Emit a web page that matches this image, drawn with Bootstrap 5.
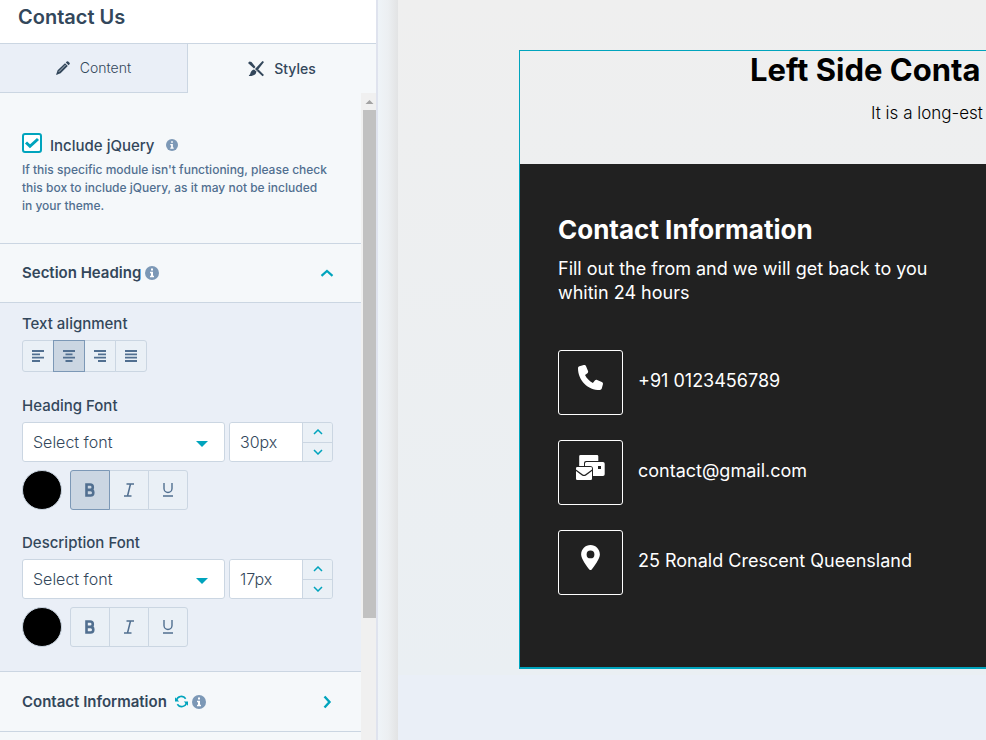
<!DOCTYPE html>
<html lang="en">
<head>
<meta charset="utf-8">
<meta name="viewport" content="width=device-width, initial-scale=1">
<title>Contact Us</title>
<link href="https://cdn.jsdelivr.net/npm/bootstrap@5.3.0/dist/css/bootstrap.min.css" rel="stylesheet">
<style>
  :root { --ink: #33475b; --slate: #516f90; --line: #cbd6e2; --teal: #00a4bd; --pale: #f5f8fa; --fill: #eaeff7; }
  body { font-family: Inter, "Liberation Sans", sans-serif; color: var(--ink); font-size: 14px; line-height: 20px; background: var(--fill); }
  svg { display: block; flex: none; }
  .editor { width: 378px; border-right: 2px solid #dfe3ee; background: var(--pale); }
  .editor-title { height: 44px; padding: 4px 18px 0; border-bottom: 1px solid var(--line); background: #fff; font-size: 20px; line-height: 26px; font-weight: 600; }
  .tab-btn { height: 49px; border: 0; background: var(--pale); color: var(--ink); gap: 10px; font-weight: 500; }
  .tab-btn.off { background: var(--fill); border-right: 1px solid var(--line); border-bottom: 1px solid var(--line); font-weight: 300; }
  .scroll-track { width: 15px; background: #f0f0f0; padding: 7px 0 0 2px; }
  .scroll-thumb { width: 13px; height: 508px; margin-top: 6px; background: #c1c1c1; }
  .block { border-bottom: 1px solid var(--line); padding-left: 22px; padding-right: 22px; }
  .intro { height: 151px; padding-top: 40px; }
  .intro label { font-size: 15px; margin: 3px 12px 0 8px; }
  .intro svg { margin-top: 6px; }
  .intro .form-check-input { width: 20px; height: 20px; margin: 0; border: 2px solid var(--teal); border-radius: 3px; background-color: #fff; background-size: 20px; }
  .intro .form-check-input:checked { background-image: url("data:image/svg+xml,%3Csvg xmlns='http://www.w3.org/2000/svg' viewBox='0 0 20 20'%3E%3Cpath d='M4 9.500l4 3.800L16 6' fill='none' stroke='%2300a4bd' stroke-width='3'/%3E%3C/svg%3E"); }
  .intro p { font-size: 12px; line-height: 18px; color: var(--slate); font-weight: 500; padding-right: 12px; margin-top: 5px; }
  .fold { height: 59px; border-top: 0; border-left: 0; border-right: 0; background: var(--pale); color: var(--ink); font-size: 15px; font-weight: 600; text-align: left; }
  .fold.closed { height: 60px; }
  .fold .end { margin: 0 5px 0 auto; }
  .fields { background: var(--fill); padding-top: 11px; padding-bottom: 24px; }
  .fields .lbl { display: block; font-size: 15px; font-weight: 500; margin-bottom: 6px; }
  .field { margin-bottom: 24px; }
  .field + .field { margin-bottom: 23px; }
  .field:last-child { margin-bottom: 0; }
  .tool { width: 32px; height: 32px; padding: 0; border: 1px solid var(--line); border-radius: 0; background: #eaf0f6; color: var(--slate); display: flex; align-items: center; justify-content: center; margin-left: -1px; }
  .tool.big { width: 40px; height: 40px; }
  .tool:first-child { margin-left: 0; border-radius: 3px 0 0 3px; }
  .tool:last-child { border-radius: 0 3px 3px 0; }
  .tool.on { background: var(--line); border-color: #7c98b6; z-index: 1; }
  .font-row { gap: 4px; margin-bottom: 8px; }
  .font-pick { appearance: none; width: 203px; height: 40px; padding: 0 10px; border: 1px solid var(--line); border-radius: 3px; color: var(--ink); font-size: 16px; font-weight: 300; background: #fff url("data:image/svg+xml,%3Csvg xmlns='http://www.w3.org/2000/svg' viewBox='0 0 12 6'%3E%3Cpath d='M0 0h12L6 6z' fill='%2300a4bd'/%3E%3C/svg%3E") no-repeat right 16px top 18px / 12px 6px; }
  .stepper { width: 104px; height: 40px; border: 1px solid var(--line); border-radius: 3px; overflow: hidden; }
  .stepper input { width: 72px; padding: 0 10px; border: 0; color: var(--ink); font-size: 16px; font-weight: 300; }
  .stepper button { border: 0; border-left: 1px solid var(--line); background: #eaf0f6; padding: 0; }
  .stepper button + button { border-top: 1px solid var(--line); }
  .swatch { width: 40px; height: 40px; padding: 0; border: 1px solid var(--line); border-radius: 50%; background: #000; margin-right: 8px; }
  .edge { width: 20px; background: linear-gradient(90deg, #eff4f8, #eceff2 50%, #e2e3e4); }
  .stage { overflow: hidden; min-width: 0; padding: 50px 0 0 121px; background: linear-gradient(#efefef, #eaeff3 675px, var(--fill) 675px); }
  .module { border: solid var(--teal); border-width: 1px 0 2px 1px; font-size: 18px; white-space: nowrap; }
  .module-head { height: 113px; color: #000; }
  .module-head h2 { font-size: 31px; line-height: 38px; font-weight: 700; margin: 0 0 14px; padding-left: 230px; }
  .module-head p { font-size: 17px; line-height: 20px; font-weight: 300; padding-left: 351px; }
  .module-body { background: #212121; color: #fff; padding: 49px 38px 72px; }
  .module-body h3 { font-size: 26px; line-height: 34px; font-weight: 700; margin-bottom: 10px; }
  .module-body p { line-height: 24px; margin-bottom: 45px; width: 390px; white-space: normal; }
  .tile { width: 65px; height: 65px; border: 1px solid #fff; border-radius: 3px; padding-top: 14px; }
  .contacts { display: grid; gap: 25px; }
  .contact { gap: 15px; line-height: 24px; }
  .contact .info-text { padding-bottom: 3px; }
</style>
<script src="https://cdn.jsdelivr.net/npm/bootstrap@5.3.0/dist/js/bootstrap.bundle.min.js"></script>
</head>
<body>
<svg width="0" height="0" class="position-absolute" aria-hidden="true">
  <symbol id="info" viewBox="0 0 14 14"><circle cx="7" cy="7" r="7" fill="#7c98b6"/><path d="M6 2.500h2v2H6zM5 5.800h3v4h1v1.500H5V9.800h1V7.200H5z" fill="#fff"/></symbol>
  <symbol id="step-up" viewBox="0 0 10 6"><path d="M1 5l4-4 4 4" fill="none" stroke="#00a4bd" stroke-width="1.500"/></symbol>
  <symbol id="step-down" viewBox="0 0 10 6"><path d="M1 1l4 4 4-4" fill="none" stroke="#00a4bd" stroke-width="1.500"/></symbol>
  <symbol id="b" viewBox="0 0 12 14"><path d="M2.500 1.500v11h4a2.800 2.800 0 0 0 0-5.600h-4 3.600a2.700 2.700 0 0 0 0-5.400z" fill="none" stroke="#516f90" stroke-width="2.600"/></symbol>
  <symbol id="i" viewBox="0 0 12 14"><path d="M3.500 1H11M1 13h7.500M7.500 1L4.500 13" fill="none" stroke="#516f90" stroke-width="1.500"/></symbol>
  <symbol id="u" viewBox="0 0 12 14"><path d="M2 0v5.500a4 4 0 0 0 8 0V0M1 13h10" fill="none" stroke="#516f90" stroke-width="1.400"/></symbol>
</svg>
<div class="d-flex min-vh-100 overflow-hidden">
  <aside class="editor flex-shrink-0 d-flex flex-column">
    <h1 class="editor-title m-0">Contact Us</h1>
    <div class="d-flex" role="tablist">
      <button class="tab-btn off col-6 d-flex align-items-center justify-content-center" role="tab" aria-selected="false"><svg width="14" height="14" viewBox="0 0 14 14" fill="#33475b"><path d="M0 14l1.600-4.800L9 2.200l2.800 2.800-7.200 7.300zM9.800 1.400l1-.9q.7-.7 1.400 0l1.300 1.300q.7.700 0 1.400l-.9 1z"/><path d="M2.800 10.800L9.600 4" stroke="#eaeff7" stroke-width=".7"/></svg>Content</button>
      <button class="tab-btn col-6 d-flex align-items-center justify-content-center" role="tab" aria-selected="true"><svg width="16" height="16" viewBox="0 0 16 16" fill="#33475b"><path d="M0 2l1.500-1.500 2 .5 4 5-1.500 1.500zM9 10l1.500-1.500L16 14l-1.500 1.200zM14.500 0L16 1 9 10 7 8zM6 8.500L8.500 10.500Q8 15 1 15q-.5-1 1-1.500Q3 9 6 8.500z"/></svg>Styles</button>
    </div>
    <div class="d-flex flex-grow-1">
      <div class="flex-grow-1">
        <div class="block intro">
          <div class="d-flex align-items-start"><input class="form-check-input" type="checkbox" id="jq" checked><label for="jq" class="fw-medium">Include jQuery</label><svg width="12" height="12"><use href="#info"/></svg></div>
          <p class="mb-0">If this specific module isn't functioning, please check this box to include jQuery, as it may not be included in your theme.</p>
        </div>
        <button class="block fold w-100 d-flex align-items-center" aria-expanded="true">Section Heading<svg class="ms-1" width="14" height="14"><use href="#info"/></svg><svg class="end" width="14" height="8" viewBox="0 0 14 8"><path d="M1.500 6.800L7 2l5.500 4.800" fill="none" stroke="#00a4bd" stroke-width="2.200"/></svg></button>
        <div class="block fields">
          <div class="field">
            <span class="lbl">Text alignment</span>
            <div class="d-flex" role="group" aria-label="Text alignment">
              <button class="tool position-relative" aria-label="Left"><svg width="12" height="12" viewBox="0 0 12 12" stroke="#516f90" stroke-width="1.800"><path d="M0 1h12M0 4.300h8M0 7.700h12M0 11h8"/></svg></button>
              <button class="tool on position-relative" aria-label="Center"><svg width="12" height="12" viewBox="0 0 12 12" stroke="#516f90" stroke-width="1.800"><path d="M0 1h12M2.500 4.300h7M0 7.700h12M2.500 11h7"/></svg></button>
              <button class="tool position-relative" aria-label="Right"><svg width="12" height="12" viewBox="0 0 12 12" stroke="#516f90" stroke-width="1.800"><path d="M0 1h12M4 4.300h8M0 7.700h12M4 11h8"/></svg></button>
              <button class="tool position-relative" aria-label="Justify"><svg width="12" height="12" viewBox="0 0 12 12" stroke="#516f90" stroke-width="1.800"><path d="M0 1h12M0 4.300h12M0 7.700h12M0 11h12"/></svg></button>
            </div>
          </div>
          <div class="field">
            <label class="lbl" for="hf">Heading Font</label>
            <div class="d-flex font-row"><select class="font-pick" id="hf"><option>Select font</option></select>
              <div class="stepper d-flex"><input type="text" value="30px" aria-label="Heading size"><div class="d-flex flex-column flex-grow-1"><button class="flex-fill d-flex align-items-center justify-content-center" aria-label="Larger"><svg width="10" height="6"><use href="#step-up"/></svg></button><button class="flex-fill d-flex align-items-center justify-content-center" aria-label="Smaller"><svg width="10" height="6"><use href="#step-down"/></svg></button></div></div></div>
            <div class="d-flex"><button class="swatch" aria-label="Heading color"></button>
              <div class="d-flex"><button class="tool big on position-relative" aria-label="Bold"><svg width="12" height="14"><use href="#b"/></svg></button><button class="tool big position-relative" aria-label="Italic"><svg width="12" height="14"><use href="#i"/></svg></button><button class="tool big position-relative" aria-label="Underline"><svg width="12" height="14"><use href="#u"/></svg></button></div></div>
          </div>
          <div class="field">
            <label class="lbl" for="df">Description Font</label>
            <div class="d-flex font-row"><select class="font-pick" id="df"><option>Select font</option></select>
              <div class="stepper d-flex"><input type="text" value="17px" aria-label="Description size"><div class="d-flex flex-column flex-grow-1"><button class="flex-fill d-flex align-items-center justify-content-center" aria-label="Larger"><svg width="10" height="6"><use href="#step-up"/></svg></button><button class="flex-fill d-flex align-items-center justify-content-center" aria-label="Smaller"><svg width="10" height="6"><use href="#step-down"/></svg></button></div></div></div>
            <div class="d-flex"><button class="swatch" aria-label="Description color"></button>
              <div class="d-flex"><button class="tool big position-relative" aria-label="Bold"><svg width="12" height="14"><use href="#b"/></svg></button><button class="tool big position-relative" aria-label="Italic"><svg width="12" height="14"><use href="#i"/></svg></button><button class="tool big position-relative" aria-label="Underline"><svg width="12" height="14"><use href="#u"/></svg></button></div></div>
          </div>
        </div>
        <button class="block fold closed w-100 d-flex align-items-center" aria-expanded="false">Contact Information<svg class="ms-2 me-1" width="13" height="13" viewBox="0 0 14 14" fill="none" stroke="#00a4bd" stroke-width="1.700"><path d="M1.500 6A5.500 5.500 0 0 1 11.500 4M12.500 8A5.500 5.500 0 0 1 2.500 10"/><path d="M0 2.500V7h4.500zM14 11.500V7H9.500z" fill="#00a4bd" stroke="none"/></svg><svg width="14" height="14"><use href="#info"/></svg><svg class="end" width="14" height="14" viewBox="0 0 14 14"><path d="M4.500 1.500L9.500 7l-5 5.500" fill="none" stroke="#00a4bd" stroke-width="2.400"/></svg></button>
      </div>
      <div class="scroll-track flex-shrink-0"><svg width="13" height="4" viewBox="0 0 13 4"><path d="M2.500 4L6.500 0l4 4z" fill="#a3a3a3"/></svg><div class="scroll-thumb"></div></div>
    </div>
  </aside>
  <div class="edge flex-shrink-0"></div>
  <main class="stage flex-grow-1">
    <section class="module">
      <div class="module-head"><h2>Left Side Conta</h2><p class="m-0">It is a long-est</p></div>
      <div class="module-body">
        <h3>Contact Information</h3>
        <p>Fill out the from and we will get back to you whitin 24 hours</p>
        <div class="contacts">
          <div class="contact d-flex align-items-center"><span class="tile d-flex justify-content-center"><svg width="25" height="25" viewBox="0 0 512 512" fill="#fff"><path d="M164.900 24.600c-7.700-18.600-28-28.500-47.400-23.200l-88 24C12.100 30.200 0 46 0 64C0 311.400 200.600 512 448 512c18 0 33.800-12.100 38.600-29.500l24-88c5.300-19.400-4.600-39.700-23.200-47.400l-96-40c-16.300-6.800-35.200-2.100-46.300 11.600L304.700 368C234.300 334.700 177.300 277.700 144 207.300L193.300 167c13.700-11.200 18.400-30 11.600-46.300l-40-96z"/></svg></span><span class="info-text">+91 0123456789</span></div>
          <div class="contact d-flex align-items-center"><span class="tile d-flex justify-content-center"><svg width="29" height="25" viewBox="0 0 29 25" fill="#fff"><path d="M4.500 0H21q1.300 0 1.300 1.300V6H10Q8 6 8 8v3H3.200V1.300Q3.200 0 4.500 0z"/><path fill-rule="evenodd" d="M10.500 7H27q1.700 0 1.700 1.700v10.600q0 1.700-1.700 1.700H17v-7q0-3-3-3H9V8.500Q9 7 10.500 7zM22 11v3h3v-3z"/><path d="M1.300 12h13.400q1.300 0 1.300 1.300v1.200l-6.500 4.700q-1.500 1-3 0L0 14.500v-1.200Q0 12 1.300 12z"/><path d="M0 16l6 4.400q2 1.200 4 0L16 16v7.700q0 1.300-1.300 1.300H1.300Q0 25 0 23.700z"/></svg></span><span class="info-text">contact@gmail.com</span></div>
          <div class="contact d-flex align-items-center"><span class="tile d-flex justify-content-center"><svg width="19" height="25" viewBox="0 0 384 512" fill="#fff"><path fill-rule="evenodd" d="M215.700 499.200C267 435 384 279.400 384 192C384 86 298 0 192 0S0 86 0 192c0 87.400 117 243 168.300 307.200c12.300 15.300 35.100 15.300 47.400 0zM192 112a80 80 0 1 1 0 160 80 80 0 1 1 0-160z"/></svg></span><span class="info-text">25 Ronald Crescent Queensland</span></div>
        </div>
      </div>
    </section>
  </main>
</div>
</body>
</html>
